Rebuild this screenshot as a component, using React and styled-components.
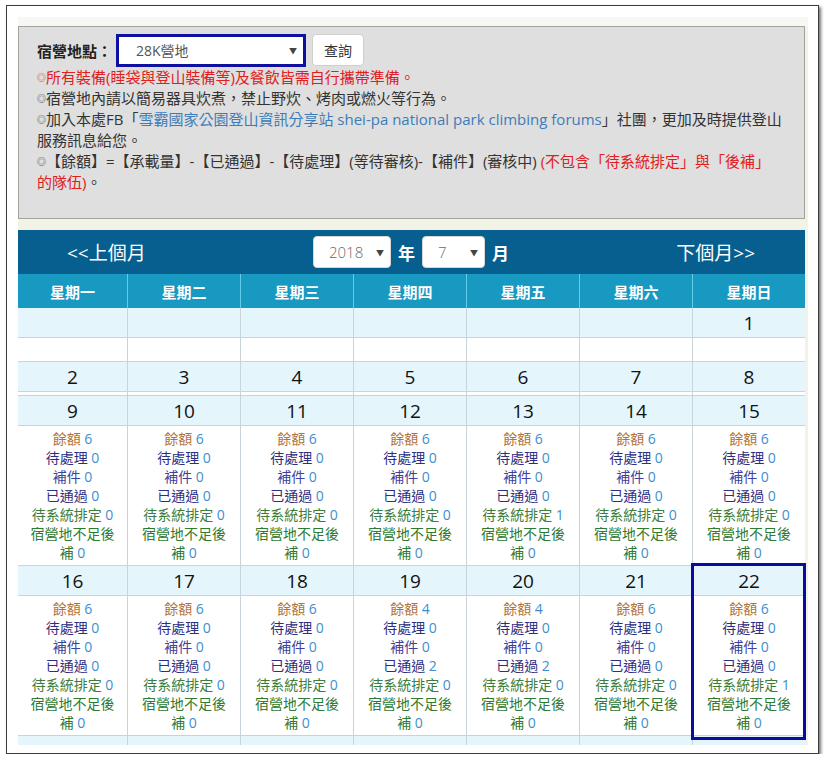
import React from "react";
import styled, { createGlobalStyle } from "styled-components";

const GlobalStyle = createGlobalStyle`
  body {
    margin: 0;
    background: #fff;
    font-family: "Open Sans", "Noto Sans CJK TC", sans-serif;
  }
`;

const Frame = styled.div`
  margin: 5px 0 0 6px;
  width: 813px;
  height: 749px;
  box-sizing: border-box;
  border: 1px solid #3c3c3c;
  box-shadow: 2px 2px 3px rgba(0, 0, 0, 0.55);
  background: #fff;
  padding: 11px 0 0 11px;
`;

const Viewport = styled.div`
  width: 790px;
  height: 728px;
  overflow: hidden;
  background: #f2f3e6;
`;

const TopStrip = styled.div`
  height: 9px;
  background: #f7f7f3;
`;

const Panel = styled.div`
  width: 787px;
  box-sizing: border-box;
  background: #dfdfdf;
  border: 1px solid #a3a39b;
  padding: 6px 18px 25px 18px;
`;

const FormRow = styled.div`
  display: flex;
  align-items: center;
  height: 34px;
`;

const Label = styled.span`
  font-size: 15px;
  font-weight: 700;
  color: #222;
  margin-right: 4px;
`;

const SelectBox = styled.div`
  width: ${(p) => p.width}px;
  height: ${(p) => p.height}px;
  box-sizing: border-box;
  display: flex;
  align-items: center;
  justify-content: space-between;
  background: #fff;
  border: ${(p) => (p.marked ? "3px solid #1010a0" : "1px solid #d6d6d6")};
  border-radius: ${(p) => (p.marked ? "0" : "4px")};
  padding: 0 6px 0 ${(p) => p.pad}px;
  font-size: ${(p) => (p.marked ? "14px" : "15px")};
  font-weight: ${(p) => (p.marked ? 400 : 300)};
  color: ${(p) => (p.marked ? "#555" : "#6a6a6a")};
`;

const Arrow = styled.span`
  font-size: 8px;
  color: #444;
`;

const Button = styled.button`
  margin-left: 6px;
  width: 52px;
  height: 32px;
  background: #fff;
  border: 1px solid #cfcfcf;
  border-radius: 4px;
  font-family: inherit;
  font-size: 14px;
  color: #333;
  padding: 0;
`;

const Note = styled.div`
  font-size: 15px;
  line-height: 21px;
  white-space: nowrap;
  color: ${(p) => (p.red ? "#e0201e" : "#333")};
`;

const Mark = styled.span`
  font-size: 9px;
  vertical-align: 2px;
`;

const Red = styled.span`
  color: #e0201e;
`;

const Link = styled.span`
  color: #3d7cb9;
`;

const Calendar = styled.div`
  width: 787px;
  margin-top: 11px;
`;

const Nav = styled.div`
  height: 44px;
  background: #075f90;
  display: grid;
  grid-template-columns: 1fr auto 1fr;
  align-items: center;
  padding: 0 50px 0 49px;
  color: #fff;
`;

const NavLink = styled.span`
  font-size: 19px;
  justify-self: ${(p) => (p.right ? "end" : "start")};
`;

const Picker = styled.div`
  display: flex;
  align-items: center;
  gap: 7px;
`;

const Unit = styled.span`
  font-size: 17px;
  font-weight: 700;
`;

const Grid = styled.div`
  display: grid;
  grid-template-columns: 109px repeat(6, 1fr);
`;

const Head = styled(Grid)`
  height: 34px;
  background: #1899c1;
`;

const HeadCell = styled.div`
  display: flex;
  align-items: center;
  justify-content: center;
  color: #fff;
  font-size: 15px;
  font-weight: 700;
  border-left: ${(p) => (p.first ? "none" : "1px solid #62cbe8")};
`;

const Day = styled.div`
  display: flex;
  flex-direction: column;
  border-left: ${(p) => (p.first ? "none" : "1px solid #c8d3da")};
  border-bottom: 1px solid #c8d3da;
  position: relative;
  ${(p) =>
    p.marked &&
    `
    z-index: 2;
    &::after {
      content: "";
      position: absolute;
      top: -3px;
      left: -2px;
      right: -1px;
      bottom: -5px;
      border: 3px solid #0b0ba0;
      pointer-events: none;
    }
  `}
`;

const DateCell = styled.div`
  height: 30px;
  box-sizing: border-box;
  border-bottom: 1px solid #c8d3da;
  background: #e4f6fc;
  display: flex;
  align-items: center;
  justify-content: center;
  font-size: 19px;
  color: #111;
`;

const Info = styled.div`
  height: ${(p) => p.height}px;
  box-sizing: border-box;
  background: #fff;
  padding: ${(p) => (p.height > 40 ? "3px 0 2px" : "0")};
  text-align: center;
  font-size: 14px;
  line-height: 19px;
  overflow: hidden;
`;

const Line = styled.div`
  color: ${(p) => p.color};
`;

const Value = styled.span`
  color: #3d8ed0;
`;

const weekdays = ["星期一", "星期二", "星期三", "星期四", "星期五", "星期六", "星期日"];

const stats = {
  9: [6, 0, 0, 0, 0, 0],
  10: [6, 0, 0, 0, 0, 0],
  11: [6, 0, 0, 0, 0, 0],
  12: [6, 0, 0, 0, 0, 0],
  13: [6, 0, 0, 0, 1, 0],
  14: [6, 0, 0, 0, 0, 0],
  15: [6, 0, 0, 0, 0, 0],
  16: [6, 0, 0, 0, 0, 0],
  17: [6, 0, 0, 0, 0, 0],
  18: [6, 0, 0, 0, 0, 0],
  19: [4, 0, 0, 2, 0, 0],
  20: [4, 0, 0, 2, 0, 0],
  21: [6, 0, 0, 0, 0, 0],
  22: [6, 0, 0, 0, 1, 0],
};

const labels = [
  ["餘額", "#b0733a"],
  ["待處理", "#2e2e80"],
  ["補件", "#3f3f9c"],
  ["已通過", "#2e2e80"],
  ["待系統排定", "#3c7d3c"],
  [
    <>
      宿營地不足後
      <br />補
    </>,
    "#2e7a2e",
  ],
];

const weeks = [
  { days: [null, null, null, null, null, null, 1], info: 23 },
  { days: [2, 3, 4, 5, 6, 7, 8], info: 3 },
  { days: [9, 10, 11, 12, 13, 14, 15], info: 139 },
  { days: [16, 17, 18, 19, 20, 21, 22], info: 139 },
  { days: [23, 24, 25, 26, 27, 28, 29], info: 139 },
];

const DayStats = ({ values }) => (
  <>
    {labels.map(([label, color], i) => (
      <Line key={i} color={color}>
        {label} <Value>{values[i]}</Value>
      </Line>
    ))}
  </>
);

const App = () => (
  <>
    <GlobalStyle />
    <Frame>
      <Viewport>
        <TopStrip />
        <Panel>
          <FormRow>
            <Label>宿營地點：</Label>
            <SelectBox marked width={190} height={33} pad={17}>
              28K營地
              <Arrow>▼</Arrow>
            </SelectBox>
            <Button>查詢</Button>
          </FormRow>
          <Note red>
            <Mark>◎</Mark>所有裝備(睡袋與登山裝備等)及餐飲皆需自行攜帶準備。
          </Note>
          <Note>
            <Mark>◎</Mark>宿營地內請以簡易器具炊煮，禁止野炊、烤肉或燃火等行為。
          </Note>
          <Note>
            <Mark>◎</Mark>加入本處FB「
            <Link>雪霸國家公園登山資訊分享站 shei-pa national park climbing forums</Link>
            」社團，更加及時提供登山
          </Note>
          <Note>服務訊息給您。</Note>
          <Note>
            <Mark>◎</Mark>【餘額】=【承載量】-【已通過】-【待處理】(等待審核)-【補件】(審核中){" "}
            <Red>(不包含「待系統排定」與「後補」</Red>
          </Note>
          <Note>
            <Red>的隊伍)</Red>。
          </Note>
        </Panel>

        <Calendar>
          <Nav>
            <NavLink>&lt;&lt;上個月</NavLink>
            <Picker>
              <SelectBox width={78} height={32} pad={15}>
                2018
                <Arrow>▼</Arrow>
              </SelectBox>
              <Unit>年</Unit>
              <SelectBox width={63} height={32} pad={15}>
                7
                <Arrow>▼</Arrow>
              </SelectBox>
              <Unit>月</Unit>
            </Picker>
            <NavLink right>下個月&gt;&gt;</NavLink>
          </Nav>
          <Head>
            {weekdays.map((w, i) => (
              <HeadCell key={w} first={i === 0}>
                {w}
              </HeadCell>
            ))}
          </Head>
          {weeks.map((week, wi) => (
            <Grid key={wi}>
              {week.days.map((d, i) => (
                <Day key={i} first={i === 0} marked={d === 22}>
                  <DateCell>{d}</DateCell>
                  <Info height={week.info}>
                    {stats[d] && <DayStats values={stats[d]} />}
                  </Info>
                </Day>
              ))}
            </Grid>
          ))}
        </Calendar>
      </Viewport>
    </Frame>
  </>
);

export default App;
